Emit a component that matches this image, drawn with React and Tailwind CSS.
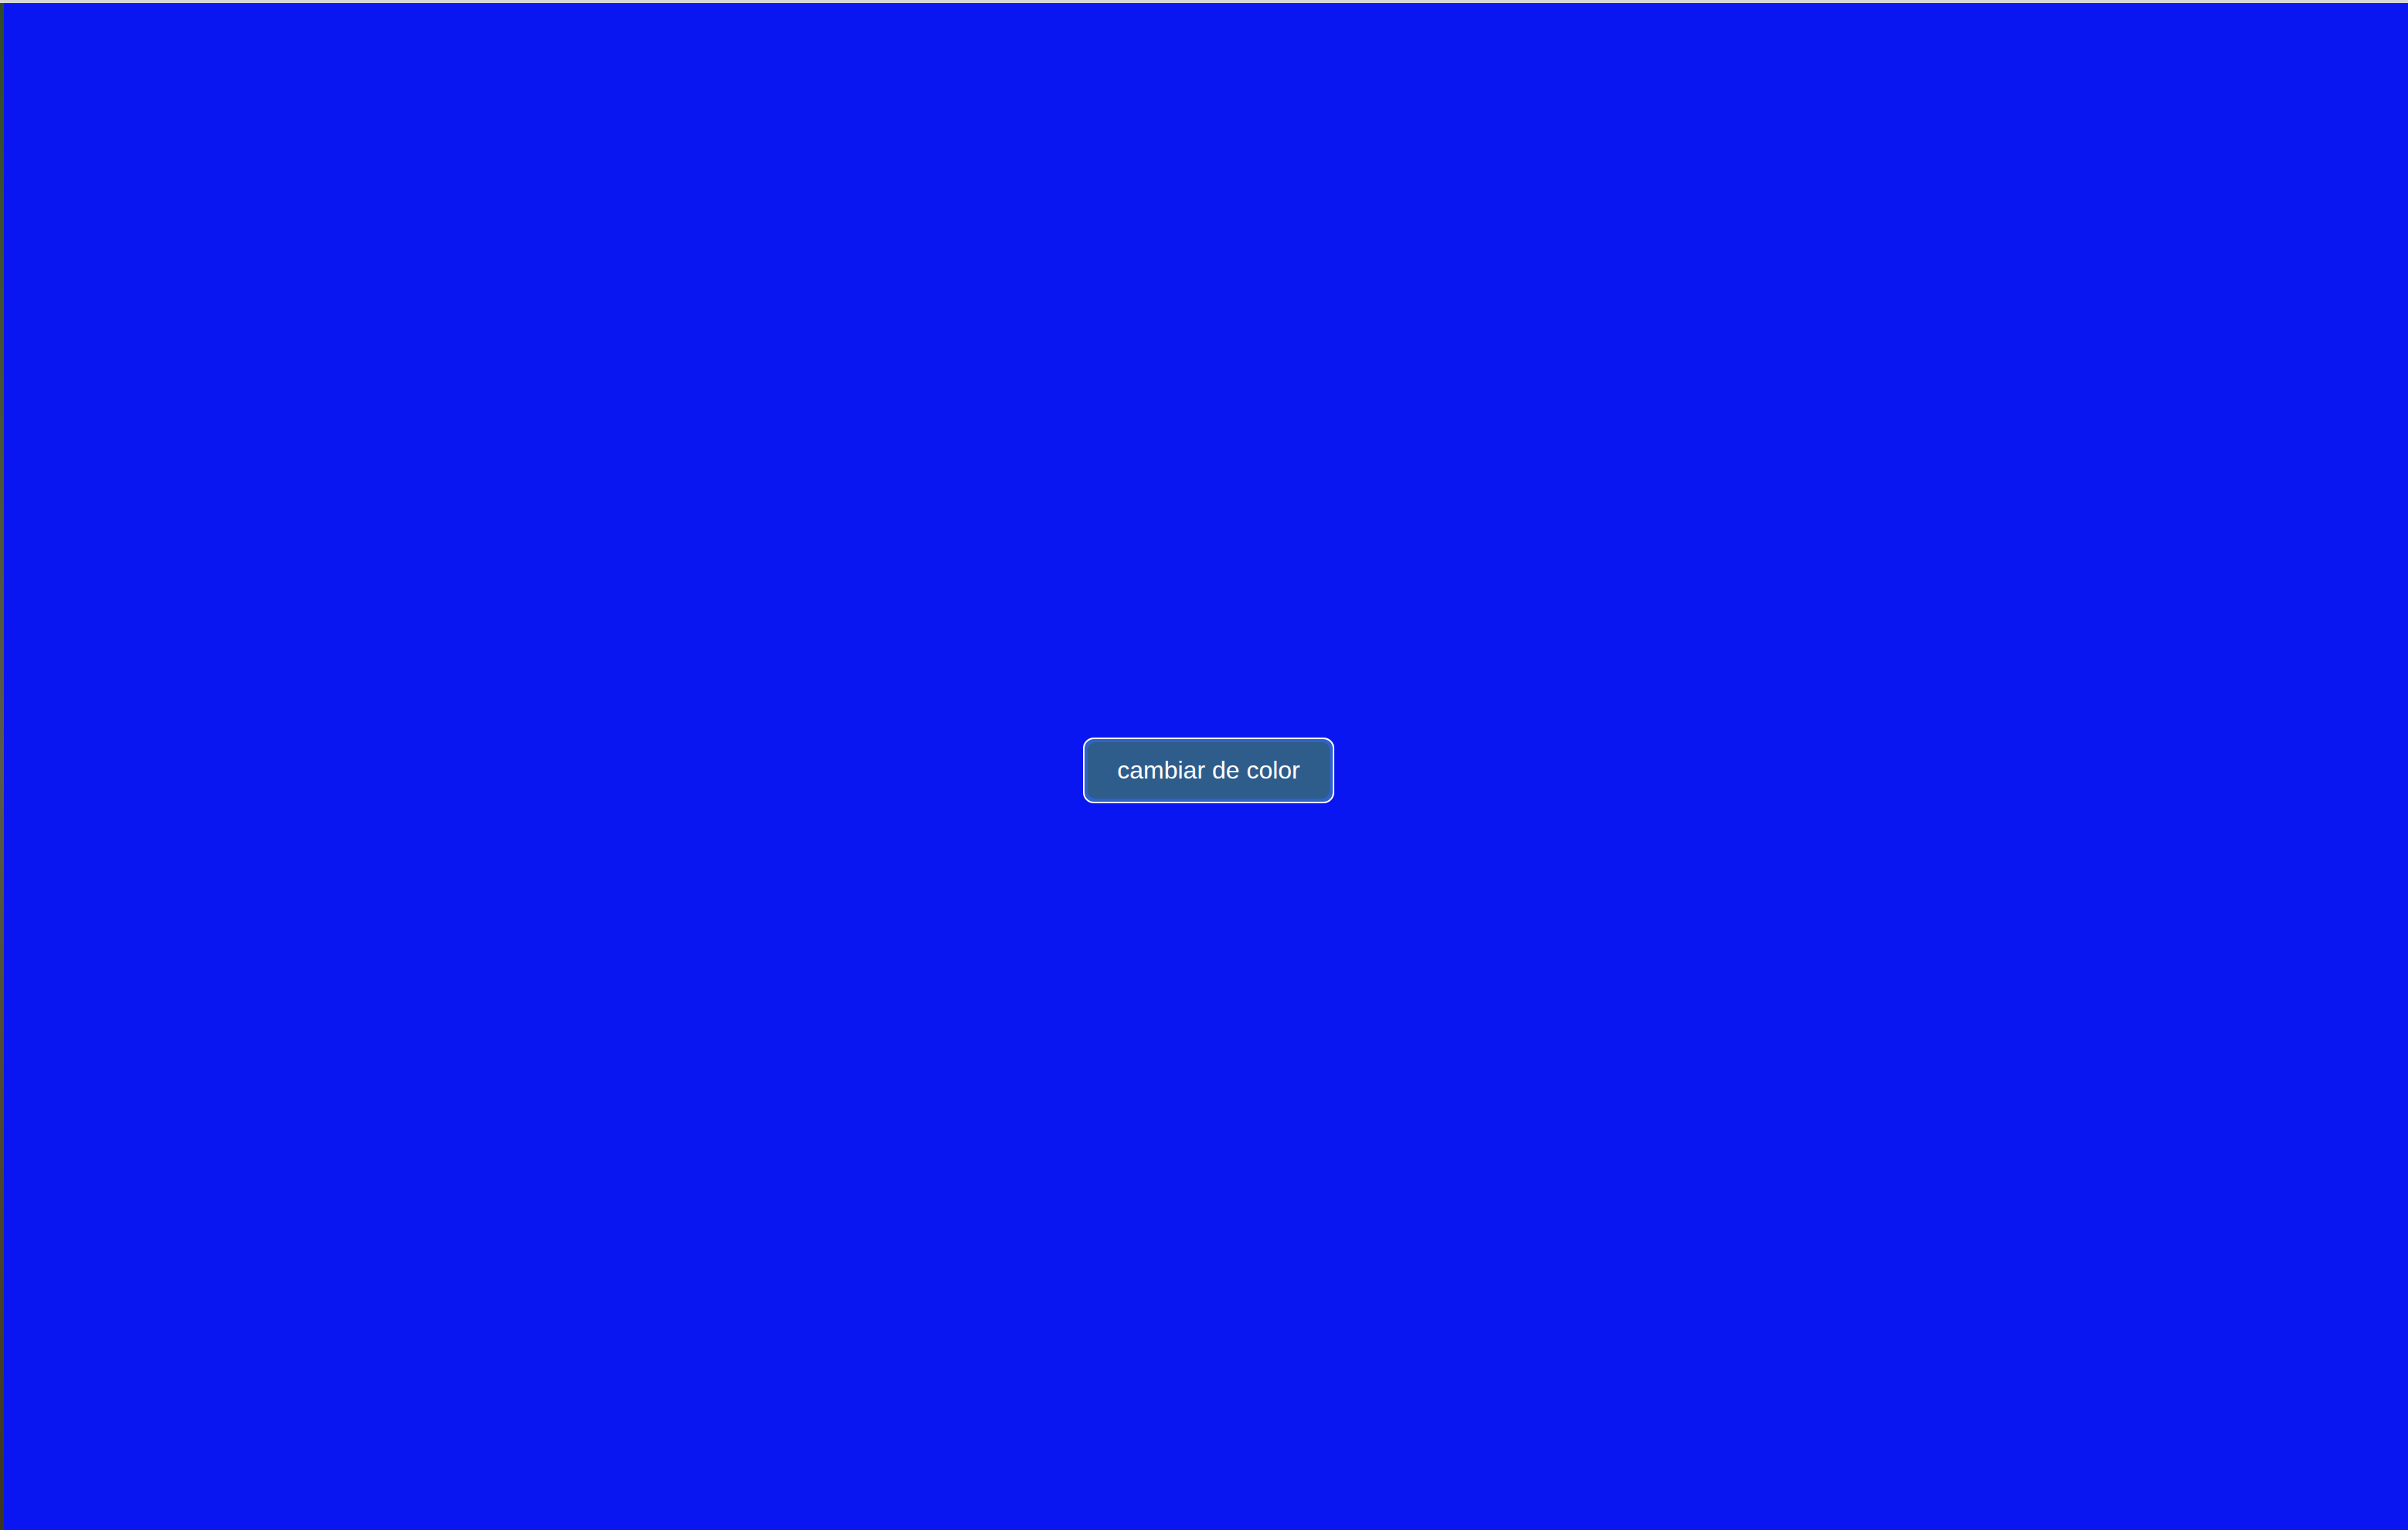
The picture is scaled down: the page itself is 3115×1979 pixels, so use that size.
export default function App() {
  return (
    <div className="flex h-[1979px] w-[3115px] flex-col overflow-hidden bg-[#0a16f2]">
      <div className="h-[4px] w-full shrink-0 bg-[#d6d6d6]" />
      <div className="flex flex-1">
        <div className="w-[5px] shrink-0 bg-gradient-to-b from-[#2f4a2a] via-[#5a5a48] to-[#3a3520]" />
        <div className="flex flex-1 items-center justify-center bg-[#0a16f2] pl-[7px] pt-[9px]">
          <button
            className="rounded-[14px] border-2 border-white bg-[#2f63c9] p-[4px]"
            style={{ fontFamily: '"Liberation Sans", Arial, sans-serif' }}
          >
            <span className="block rounded-[10px] bg-[#2e5c8b] px-[38px] py-[18px] text-[32px] leading-[37px] text-white">
              cambiar de color
            </span>
          </button>
        </div>
      </div>
    </div>
  );
}
